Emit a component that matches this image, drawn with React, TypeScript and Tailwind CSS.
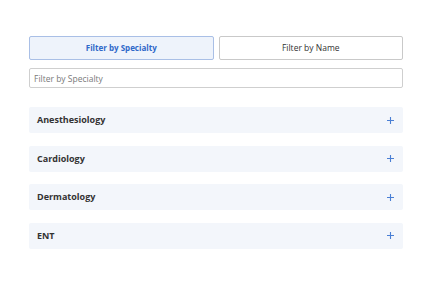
import React from "react";

const items = ["Anesthesiology", "Cardiology", "Dermatology", "ENT"];

export default function App() {
  return (
    <div className="w-[432px] h-[288px] bg-white" style={{ fontFamily: '"Open Sans", sans-serif' }}>
      <div className="pt-[36px] pl-[29px] w-[403px]">
        <div className="flex gap-[5px]">
          <button className="flex-1 h-[24px] rounded-[2px] border border-[#a9bfe6] bg-[#eef3fb] text-[8px] font-bold text-[#2f68c9]">
            Filter by Specialty
          </button>
          <button className="flex-1 h-[24px] rounded-[2px] border border-[#c9c9c9] bg-white text-[8.5px] text-[#333]">
            Filter by Name
          </button>
        </div>
        <input
          className="mt-[8px] w-full h-[20px] rounded-[2px] border border-[#cfcfcf] px-[4px] text-[8.5px] text-[#333] placeholder:text-[#7a7a7a] outline-none"
          placeholder="Filter by Specialty"
        />
        <div className="mt-[19px] flex flex-col gap-[12.5px]">
          {items.map((t) => (
            <div key={t} className="h-[26px] rounded-[2px] bg-[#f3f6fb] flex items-center justify-between pl-[8px] pr-[8px]">
              <span className="text-[9px] font-bold text-[#333]">{t}</span>
              <svg width="9" height="9" viewBox="0 0 9 9">
                <path d="M4.5 1v7M1 4.5h7" stroke="#4a7fd4" strokeWidth="1.1" />
              </svg>
            </div>
          ))}
        </div>
      </div>
    </div>
  );
}
